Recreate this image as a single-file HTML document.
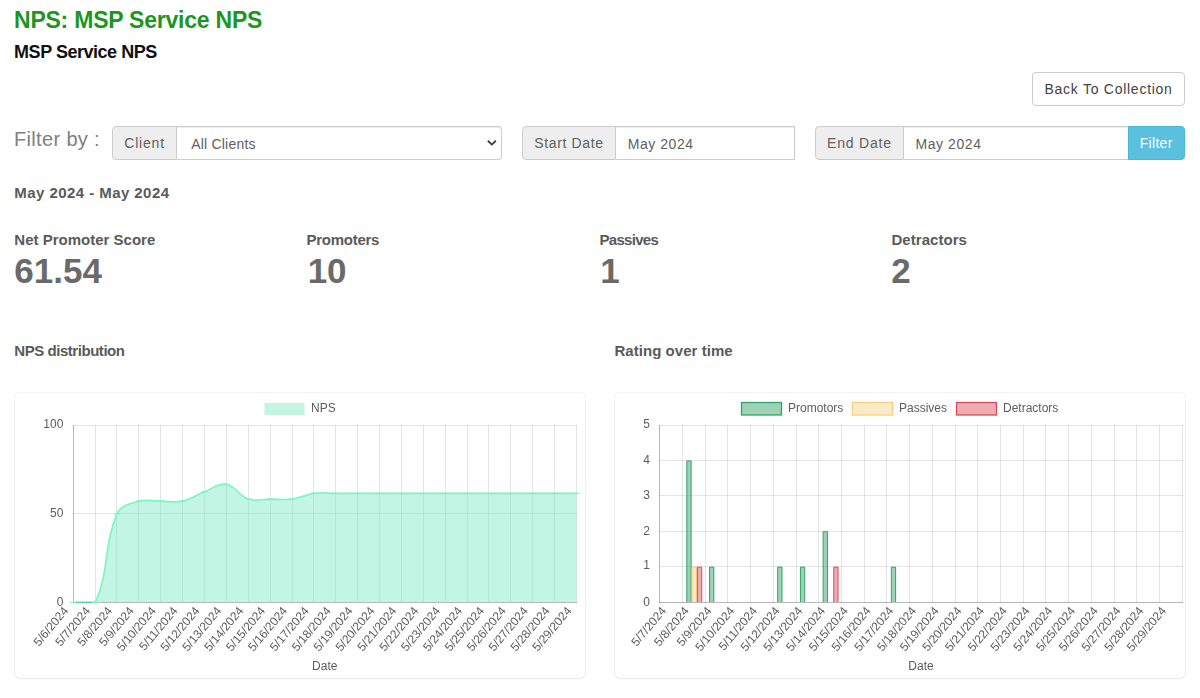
<!DOCTYPE html>
<html lang="en"><head><meta charset="utf-8"><title>NPS: MSP Service NPS</title>
<style>
*{box-sizing:border-box}
html,body{margin:0;padding:0;background:#fff}
body{width:1200px;height:698px;position:relative;overflow:hidden;font-family:"Liberation Sans",sans-serif}
.t{position:absolute;white-space:nowrap;line-height:1;display:block;margin:0;padding:0}
.box{position:absolute}
.addon{background:#eee;border:1px solid #ccc;border-radius:4px 0 0 4px}
.inp{background:#fff;border:1px solid #ccc;border-left:0;box-shadow:inset 0 1px 1px rgba(0,0,0,.075)}
.card{position:absolute;background:#fff;border-radius:5px;box-shadow:0 0 0 1px rgba(0,0,0,0.045),0 1px 2px rgba(0,0,0,0.06)}
.chart{position:absolute;overflow:visible}
.tk{font-family:"Liberation Sans",sans-serif;font-size:12px;fill:#5c5c5c;filter:grayscale(1)}
</style></head>
<body>
<div class="box" style="left:1032px;top:72px;width:153px;height:34px;border:1px solid #ccc;border-radius:4px;background:#fff"></div>
<div class="box addon" style="left:112px;top:126px;width:65px;height:34px"></div>
<div class="box inp" style="left:177px;top:126px;width:325px;height:34px;border-radius:0 4px 4px 0"></div>
<svg class="box" style="left:486.2px;top:139.3px" width="12" height="10" viewBox="0 0 12 10"><path d="M1.85,1.75 L5.85,5.6 L9.85,1.75" fill="none" stroke="#343a40" stroke-width="1.8" stroke-linecap="butt" stroke-linejoin="miter"/></svg>
<div class="box addon" style="left:522px;top:126px;width:94px;height:34px"></div>
<div class="box inp" style="left:616px;top:126px;width:179px;height:34px"></div>
<div class="box addon" style="left:815px;top:126px;width:89px;height:34px"></div>
<div class="box inp" style="left:904px;top:126px;width:225px;height:34px"></div>
<div class="box" style="left:1128px;top:126px;width:57px;height:34px;background:#5bc0de;border:1px solid #46b8da;border-radius:0 4px 4px 0"></div>
<div class="card" style="left:15px;top:393px;width:570px;height:285px"></div>
<div class="card" style="left:615px;top:393px;width:570px;height:285px"></div>
<h1 class="t" id="t_title" style="left:14.00px;top:8.73px;font-size:23px;font-weight:700;color:#1d961f;letter-spacing:-0.226px;">NPS: MSP Service NPS</h1>
<h2 class="t" id="t_sub" style="left:14.10px;top:42.86px;font-size:18px;font-weight:700;color:#111111;letter-spacing:-0.471px;">MSP Service NPS</h2>
<span class="t" id="t_back" style="left:1044.50px;top:82.15px;font-size:14px;font-weight:400;color:#424242;letter-spacing:0.735px;">Back To Collection</span>
<span class="t" id="t_filterby" style="left:14.00px;top:128.87px;font-size:20px;font-weight:400;color:#808080;letter-spacing:0.340px;">Filter by :</span>
<label class="t" id="t_client" style="left:124.25px;top:136.35px;font-size:14px;font-weight:400;color:#606060;letter-spacing:0.800px;">Client</label>
<span class="t" id="t_allcl" style="left:191.25px;top:136.75px;font-size:14px;font-weight:400;color:#606060;letter-spacing:0.200px;">All Clients</span>
<label class="t" id="t_sd" style="left:534.25px;top:136.35px;font-size:14px;font-weight:400;color:#606060;letter-spacing:0.639px;">Start Date</label>
<span class="t" id="t_sdv" style="left:627.75px;top:136.75px;font-size:14px;font-weight:400;color:#606060;letter-spacing:0.536px;">May 2024</span>
<label class="t" id="t_ed" style="left:827.00px;top:136.35px;font-size:14px;font-weight:400;color:#606060;letter-spacing:0.821px;">End Date</label>
<span class="t" id="t_edv" style="left:915.50px;top:136.75px;font-size:14px;font-weight:400;color:#606060;letter-spacing:0.571px;">May 2024</span>
<span class="t" id="t_filter" style="left:1139.75px;top:136.35px;font-size:14px;font-weight:400;color:#ffffff;letter-spacing:0.300px;">Filter</span>
<h4 class="t" id="t_range" style="left:14.35px;top:185.30px;font-size:15px;font-weight:700;color:#5a5a5a;letter-spacing:0.439px;">May 2024 - May 2024</h4>
<span class="t" id="t_l1" style="left:14.35px;top:232.30px;font-size:15px;font-weight:700;color:#5a5a5a;">Net Promoter Score</span>
<span class="t" id="t_l2" style="left:306.50px;top:232.30px;font-size:15px;font-weight:700;color:#5a5a5a;letter-spacing:-0.269px;">Promoters</span>
<span class="t" id="t_l3" style="left:599.40px;top:232.30px;font-size:15px;font-weight:700;color:#5a5a5a;letter-spacing:-0.679px;">Passives</span>
<span class="t" id="t_l4" style="left:891.50px;top:232.30px;font-size:15px;font-weight:700;color:#5a5a5a;letter-spacing:0.039px;">Detractors</span>
<span class="t" id="t_n1" style="left:14.25px;top:253.17px;font-size:35px;font-weight:700;color:#6a6a6a;letter-spacing:0.025px;">61.54</span>
<span class="t" id="t_n2" style="left:307.75px;top:253.17px;font-size:35px;font-weight:700;color:#6a6a6a;letter-spacing:-0.100px;">10</span>
<span class="t" id="t_n3" style="left:600.25px;top:253.17px;font-size:35px;font-weight:700;color:#6a6a6a;">1</span>
<span class="t" id="t_n4" style="left:891.25px;top:253.17px;font-size:35px;font-weight:700;color:#6a6a6a;">2</span>
<h3 class="t" id="t_h1" style="left:14.35px;top:343.30px;font-size:15px;font-weight:700;color:#5a5a5a;letter-spacing:-0.457px;">NPS distribution</h3>
<h3 class="t" id="t_h2" style="left:614.50px;top:343.30px;font-size:15px;font-weight:700;color:#5a5a5a;letter-spacing:0.040px;">Rating over time</h3>
<svg class="chart" style="left:15px;top:393px" width="570" height="285" viewBox="0 0 570 285">
<rect x="249.5" y="10" width="40" height="12" fill="#c3f5e3"/>
<text x="296" y="19.19999999999999" class="tk">NPS</text>
<line x1="58.5" y1="32.0" x2="58.5" y2="210.0" stroke="rgba(0,0,0,0.28)" stroke-width="1"/>
<line x1="80.5" y1="32.0" x2="80.5" y2="210.0" stroke="rgba(0,0,0,0.1)" stroke-width="1"/>
<line x1="101.5" y1="32.0" x2="101.5" y2="210.0" stroke="rgba(0,0,0,0.1)" stroke-width="1"/>
<line x1="123.5" y1="32.0" x2="123.5" y2="210.0" stroke="rgba(0,0,0,0.1)" stroke-width="1"/>
<line x1="145.5" y1="32.0" x2="145.5" y2="210.0" stroke="rgba(0,0,0,0.1)" stroke-width="1"/>
<line x1="167.5" y1="32.0" x2="167.5" y2="210.0" stroke="rgba(0,0,0,0.1)" stroke-width="1"/>
<line x1="189.5" y1="32.0" x2="189.5" y2="210.0" stroke="rgba(0,0,0,0.1)" stroke-width="1"/>
<line x1="211.5" y1="32.0" x2="211.5" y2="210.0" stroke="rgba(0,0,0,0.1)" stroke-width="1"/>
<line x1="233.5" y1="32.0" x2="233.5" y2="210.0" stroke="rgba(0,0,0,0.1)" stroke-width="1"/>
<line x1="255.5" y1="32.0" x2="255.5" y2="210.0" stroke="rgba(0,0,0,0.1)" stroke-width="1"/>
<line x1="277.5" y1="32.0" x2="277.5" y2="210.0" stroke="rgba(0,0,0,0.1)" stroke-width="1"/>
<line x1="298.5" y1="32.0" x2="298.5" y2="210.0" stroke="rgba(0,0,0,0.1)" stroke-width="1"/>
<line x1="320.5" y1="32.0" x2="320.5" y2="210.0" stroke="rgba(0,0,0,0.1)" stroke-width="1"/>
<line x1="342.5" y1="32.0" x2="342.5" y2="210.0" stroke="rgba(0,0,0,0.1)" stroke-width="1"/>
<line x1="364.5" y1="32.0" x2="364.5" y2="210.0" stroke="rgba(0,0,0,0.1)" stroke-width="1"/>
<line x1="386.5" y1="32.0" x2="386.5" y2="210.0" stroke="rgba(0,0,0,0.1)" stroke-width="1"/>
<line x1="408.5" y1="32.0" x2="408.5" y2="210.0" stroke="rgba(0,0,0,0.1)" stroke-width="1"/>
<line x1="430.5" y1="32.0" x2="430.5" y2="210.0" stroke="rgba(0,0,0,0.1)" stroke-width="1"/>
<line x1="452.5" y1="32.0" x2="452.5" y2="210.0" stroke="rgba(0,0,0,0.1)" stroke-width="1"/>
<line x1="473.5" y1="32.0" x2="473.5" y2="210.0" stroke="rgba(0,0,0,0.1)" stroke-width="1"/>
<line x1="495.5" y1="32.0" x2="495.5" y2="210.0" stroke="rgba(0,0,0,0.1)" stroke-width="1"/>
<line x1="517.5" y1="32.0" x2="517.5" y2="210.0" stroke="rgba(0,0,0,0.1)" stroke-width="1"/>
<line x1="539.5" y1="32.0" x2="539.5" y2="210.0" stroke="rgba(0,0,0,0.1)" stroke-width="1"/>
<line x1="561.5" y1="32.0" x2="561.5" y2="210.0" stroke="rgba(0,0,0,0.1)" stroke-width="1"/>
<line x1="58" y1="32.5" x2="562" y2="32.5" stroke="rgba(0,0,0,0.1)" stroke-width="1"/>
<text x="48.4" y="35.3" text-anchor="end" class="tk">100</text>
<line x1="58" y1="120.5" x2="562" y2="120.5" stroke="rgba(0,0,0,0.1)" stroke-width="1"/>
<text x="48.4" y="124.3" text-anchor="end" class="tk">50</text>
<line x1="58" y1="209.5" x2="562" y2="209.5" stroke="rgba(0,0,0,0.28)" stroke-width="1"/>
<text x="48.4" y="213.4" text-anchor="end" class="tk">0</text>
<path d="M58.22,209.30 C66.97,209.30 76.71,209.30 80.10,209.30 C94.22,180.75 88.27,152.48 101.98,120.80 C105.78,112.02 114.48,110.87 123.86,108.16 C131.98,105.82 136.99,108.16 145.74,108.16 C154.49,108.16 159.24,109.98 167.62,108.16 C176.75,106.18 180.61,102.10 189.50,98.68 C198.11,95.36 203.21,89.92 211.38,91.29 C220.72,92.87 223.69,102.83 233.26,106.06 C241.19,108.73 246.39,106.06 255.14,106.06 C263.89,106.06 268.41,107.17 277.02,106.06 C285.91,104.90 290.01,101.53 298.90,100.37 C307.51,99.26 312.03,100.37 320.78,100.37 C329.53,100.37 333.91,100.37 342.66,100.37 C351.41,100.37 355.79,100.37 364.54,100.37 C373.29,100.37 377.67,100.37 386.42,100.37 C395.17,100.37 399.55,100.37 408.30,100.37 C417.05,100.37 421.43,100.37 430.18,100.37 C438.93,100.37 443.31,100.37 452.06,100.37 C460.81,100.37 465.19,100.37 473.94,100.37 C482.69,100.37 487.07,100.37 495.82,100.37 C504.57,100.37 508.95,100.37 517.70,100.37 C526.45,100.37 530.83,100.37 539.58,100.37 C548.33,100.37 552.71,100.37 561.46,100.37 L561.46,209.3 L58.22,209.3 Z" fill="rgba(110,232,188,0.42)"/>
<path d="M58.22,209.30 C66.97,209.30 76.71,209.30 80.10,209.30 C94.22,180.75 88.27,152.48 101.98,120.80 C105.78,112.02 114.48,110.87 123.86,108.16 C131.98,105.82 136.99,108.16 145.74,108.16 C154.49,108.16 159.24,109.98 167.62,108.16 C176.75,106.18 180.61,102.10 189.50,98.68 C198.11,95.36 203.21,89.92 211.38,91.29 C220.72,92.87 223.69,102.83 233.26,106.06 C241.19,108.73 246.39,106.06 255.14,106.06 C263.89,106.06 268.41,107.17 277.02,106.06 C285.91,104.90 290.01,101.53 298.90,100.37 C307.51,99.26 312.03,100.37 320.78,100.37 C329.53,100.37 333.91,100.37 342.66,100.37 C351.41,100.37 355.79,100.37 364.54,100.37 C373.29,100.37 377.67,100.37 386.42,100.37 C395.17,100.37 399.55,100.37 408.30,100.37 C417.05,100.37 421.43,100.37 430.18,100.37 C438.93,100.37 443.31,100.37 452.06,100.37 C460.81,100.37 465.19,100.37 473.94,100.37 C482.69,100.37 487.07,100.37 495.82,100.37 C504.57,100.37 508.95,100.37 517.70,100.37 C526.45,100.37 530.83,100.37 539.58,100.37 C548.33,100.37 552.71,100.37 561.46,100.37" fill="none" stroke="#7df6bf" stroke-width="1.65"/>
<line x1="55.22" y1="209.30" x2="61.22" y2="209.30" stroke="#7af5bd" stroke-width="1.2"/>
<line x1="77.10" y1="209.30" x2="83.10" y2="209.30" stroke="#7af5bd" stroke-width="1.2"/>
<line x1="98.98" y1="120.80" x2="104.98" y2="120.80" stroke="#7af5bd" stroke-width="1.2"/>
<line x1="120.86" y1="108.16" x2="126.86" y2="108.16" stroke="#7af5bd" stroke-width="1.2"/>
<line x1="142.74" y1="108.16" x2="148.74" y2="108.16" stroke="#7af5bd" stroke-width="1.2"/>
<line x1="164.62" y1="108.16" x2="170.62" y2="108.16" stroke="#7af5bd" stroke-width="1.2"/>
<line x1="186.50" y1="98.68" x2="192.50" y2="98.68" stroke="#7af5bd" stroke-width="1.2"/>
<line x1="208.38" y1="91.29" x2="214.38" y2="91.29" stroke="#7af5bd" stroke-width="1.2"/>
<line x1="230.26" y1="106.06" x2="236.26" y2="106.06" stroke="#7af5bd" stroke-width="1.2"/>
<line x1="252.14" y1="106.06" x2="258.14" y2="106.06" stroke="#7af5bd" stroke-width="1.2"/>
<line x1="274.02" y1="106.06" x2="280.02" y2="106.06" stroke="#7af5bd" stroke-width="1.2"/>
<line x1="295.90" y1="100.37" x2="301.90" y2="100.37" stroke="#7af5bd" stroke-width="1.2"/>
<line x1="317.78" y1="100.37" x2="323.78" y2="100.37" stroke="#7af5bd" stroke-width="1.2"/>
<line x1="339.66" y1="100.37" x2="345.66" y2="100.37" stroke="#7af5bd" stroke-width="1.2"/>
<line x1="361.54" y1="100.37" x2="367.54" y2="100.37" stroke="#7af5bd" stroke-width="1.2"/>
<line x1="383.42" y1="100.37" x2="389.42" y2="100.37" stroke="#7af5bd" stroke-width="1.2"/>
<line x1="405.30" y1="100.37" x2="411.30" y2="100.37" stroke="#7af5bd" stroke-width="1.2"/>
<line x1="427.18" y1="100.37" x2="433.18" y2="100.37" stroke="#7af5bd" stroke-width="1.2"/>
<line x1="449.06" y1="100.37" x2="455.06" y2="100.37" stroke="#7af5bd" stroke-width="1.2"/>
<line x1="470.94" y1="100.37" x2="476.94" y2="100.37" stroke="#7af5bd" stroke-width="1.2"/>
<line x1="492.82" y1="100.37" x2="498.82" y2="100.37" stroke="#7af5bd" stroke-width="1.2"/>
<line x1="514.70" y1="100.37" x2="520.70" y2="100.37" stroke="#7af5bd" stroke-width="1.2"/>
<line x1="536.58" y1="100.37" x2="542.58" y2="100.37" stroke="#7af5bd" stroke-width="1.2"/>
<line x1="558.46" y1="100.37" x2="564.46" y2="100.37" stroke="#7af5bd" stroke-width="1.2"/>
<line x1="61.22" y1="209.3" x2="77.10" y2="209.3" stroke="rgba(0,0,0,0.22)" stroke-width="1"/>
<text transform="translate(51.52,216.10) rotate(-50)" text-anchor="end" dominant-baseline="middle" class="tk">5/6/2024</text>
<text transform="translate(73.40,216.10) rotate(-50)" text-anchor="end" dominant-baseline="middle" class="tk">5/7/2024</text>
<text transform="translate(95.28,216.10) rotate(-50)" text-anchor="end" dominant-baseline="middle" class="tk">5/8/2024</text>
<text transform="translate(117.16,216.10) rotate(-50)" text-anchor="end" dominant-baseline="middle" class="tk">5/9/2024</text>
<text transform="translate(139.04,216.10) rotate(-50)" text-anchor="end" dominant-baseline="middle" class="tk">5/10/2024</text>
<text transform="translate(160.92,216.10) rotate(-50)" text-anchor="end" dominant-baseline="middle" class="tk">5/11/2024</text>
<text transform="translate(182.80,216.10) rotate(-50)" text-anchor="end" dominant-baseline="middle" class="tk">5/12/2024</text>
<text transform="translate(204.68,216.10) rotate(-50)" text-anchor="end" dominant-baseline="middle" class="tk">5/13/2024</text>
<text transform="translate(226.56,216.10) rotate(-50)" text-anchor="end" dominant-baseline="middle" class="tk">5/14/2024</text>
<text transform="translate(248.44,216.10) rotate(-50)" text-anchor="end" dominant-baseline="middle" class="tk">5/15/2024</text>
<text transform="translate(270.32,216.10) rotate(-50)" text-anchor="end" dominant-baseline="middle" class="tk">5/16/2024</text>
<text transform="translate(292.20,216.10) rotate(-50)" text-anchor="end" dominant-baseline="middle" class="tk">5/17/2024</text>
<text transform="translate(314.08,216.10) rotate(-50)" text-anchor="end" dominant-baseline="middle" class="tk">5/18/2024</text>
<text transform="translate(335.96,216.10) rotate(-50)" text-anchor="end" dominant-baseline="middle" class="tk">5/19/2024</text>
<text transform="translate(357.84,216.10) rotate(-50)" text-anchor="end" dominant-baseline="middle" class="tk">5/20/2024</text>
<text transform="translate(379.72,216.10) rotate(-50)" text-anchor="end" dominant-baseline="middle" class="tk">5/21/2024</text>
<text transform="translate(401.60,216.10) rotate(-50)" text-anchor="end" dominant-baseline="middle" class="tk">5/22/2024</text>
<text transform="translate(423.48,216.10) rotate(-50)" text-anchor="end" dominant-baseline="middle" class="tk">5/23/2024</text>
<text transform="translate(445.36,216.10) rotate(-50)" text-anchor="end" dominant-baseline="middle" class="tk">5/24/2024</text>
<text transform="translate(467.24,216.10) rotate(-50)" text-anchor="end" dominant-baseline="middle" class="tk">5/25/2024</text>
<text transform="translate(489.12,216.10) rotate(-50)" text-anchor="end" dominant-baseline="middle" class="tk">5/26/2024</text>
<text transform="translate(511.00,216.10) rotate(-50)" text-anchor="end" dominant-baseline="middle" class="tk">5/27/2024</text>
<text transform="translate(532.88,216.10) rotate(-50)" text-anchor="end" dominant-baseline="middle" class="tk">5/28/2024</text>
<text transform="translate(554.76,216.10) rotate(-50)" text-anchor="end" dominant-baseline="middle" class="tk">5/29/2024</text>
<text x="309.8" y="277" text-anchor="middle" class="tk">Date</text>
</svg>
<svg class="chart" style="left:615px;top:393px" width="570" height="285" viewBox="0 0 570 285">
<rect x="126.5" y="9.5" width="40" height="12.5" fill="rgba(58,166,109,0.5)" stroke="#36a168" stroke-width="1.3"/>
<text x="173" y="19.19999999999999" class="tk">Promotors</text>
<rect x="237.5" y="9.5" width="40" height="12.5" fill="rgba(248,213,140,0.5)" stroke="#f6d080" stroke-width="1.3"/>
<text x="284" y="19.19999999999999" class="tk">Passives</text>
<rect x="341.5" y="9.5" width="40" height="12.5" fill="rgba(222,88,102,0.5)" stroke="#d84a59" stroke-width="1.3"/>
<text x="388" y="19.19999999999999" class="tk">Detractors</text>
<line x1="44.5" y1="32.0" x2="44.5" y2="210.0" stroke="rgba(0,0,0,0.28)" stroke-width="1"/>
<line x1="67.5" y1="32.0" x2="67.5" y2="210.0" stroke="rgba(0,0,0,0.1)" stroke-width="1"/>
<line x1="90.5" y1="32.0" x2="90.5" y2="210.0" stroke="rgba(0,0,0,0.1)" stroke-width="1"/>
<line x1="112.5" y1="32.0" x2="112.5" y2="210.0" stroke="rgba(0,0,0,0.1)" stroke-width="1"/>
<line x1="135.5" y1="32.0" x2="135.5" y2="210.0" stroke="rgba(0,0,0,0.1)" stroke-width="1"/>
<line x1="158.5" y1="32.0" x2="158.5" y2="210.0" stroke="rgba(0,0,0,0.1)" stroke-width="1"/>
<line x1="181.5" y1="32.0" x2="181.5" y2="210.0" stroke="rgba(0,0,0,0.1)" stroke-width="1"/>
<line x1="203.5" y1="32.0" x2="203.5" y2="210.0" stroke="rgba(0,0,0,0.1)" stroke-width="1"/>
<line x1="226.5" y1="32.0" x2="226.5" y2="210.0" stroke="rgba(0,0,0,0.1)" stroke-width="1"/>
<line x1="249.5" y1="32.0" x2="249.5" y2="210.0" stroke="rgba(0,0,0,0.1)" stroke-width="1"/>
<line x1="271.5" y1="32.0" x2="271.5" y2="210.0" stroke="rgba(0,0,0,0.1)" stroke-width="1"/>
<line x1="294.5" y1="32.0" x2="294.5" y2="210.0" stroke="rgba(0,0,0,0.1)" stroke-width="1"/>
<line x1="317.5" y1="32.0" x2="317.5" y2="210.0" stroke="rgba(0,0,0,0.1)" stroke-width="1"/>
<line x1="340.5" y1="32.0" x2="340.5" y2="210.0" stroke="rgba(0,0,0,0.1)" stroke-width="1"/>
<line x1="362.5" y1="32.0" x2="362.5" y2="210.0" stroke="rgba(0,0,0,0.1)" stroke-width="1"/>
<line x1="385.5" y1="32.0" x2="385.5" y2="210.0" stroke="rgba(0,0,0,0.1)" stroke-width="1"/>
<line x1="408.5" y1="32.0" x2="408.5" y2="210.0" stroke="rgba(0,0,0,0.1)" stroke-width="1"/>
<line x1="430.5" y1="32.0" x2="430.5" y2="210.0" stroke="rgba(0,0,0,0.1)" stroke-width="1"/>
<line x1="453.5" y1="32.0" x2="453.5" y2="210.0" stroke="rgba(0,0,0,0.1)" stroke-width="1"/>
<line x1="476.5" y1="32.0" x2="476.5" y2="210.0" stroke="rgba(0,0,0,0.1)" stroke-width="1"/>
<line x1="499.5" y1="32.0" x2="499.5" y2="210.0" stroke="rgba(0,0,0,0.1)" stroke-width="1"/>
<line x1="521.5" y1="32.0" x2="521.5" y2="210.0" stroke="rgba(0,0,0,0.1)" stroke-width="1"/>
<line x1="544.5" y1="32.0" x2="544.5" y2="210.0" stroke="rgba(0,0,0,0.1)" stroke-width="1"/>
<line x1="567.5" y1="32.0" x2="567.5" y2="210.0" stroke="rgba(0,0,0,0.1)" stroke-width="1"/>
<line x1="44" y1="32.5" x2="568" y2="32.5" stroke="rgba(0,0,0,0.1)" stroke-width="1"/>
<text x="34.9" y="35.3" text-anchor="end" class="tk">5</text>
<line x1="44" y1="67.5" x2="568" y2="67.5" stroke="rgba(0,0,0,0.1)" stroke-width="1"/>
<text x="34.9" y="70.8" text-anchor="end" class="tk">4</text>
<line x1="44" y1="102.5" x2="568" y2="102.5" stroke="rgba(0,0,0,0.1)" stroke-width="1"/>
<text x="34.9" y="105.5" text-anchor="end" class="tk">3</text>
<line x1="44" y1="138.5" x2="568" y2="138.5" stroke="rgba(0,0,0,0.1)" stroke-width="1"/>
<text x="34.9" y="141.5" text-anchor="end" class="tk">2</text>
<line x1="44" y1="173.5" x2="568" y2="173.5" stroke="rgba(0,0,0,0.1)" stroke-width="1"/>
<text x="34.9" y="176.4" text-anchor="end" class="tk">1</text>
<line x1="44" y1="209.5" x2="568" y2="209.5" stroke="rgba(0,0,0,0.28)" stroke-width="1"/>
<text x="34.9" y="213.1" text-anchor="end" class="tk">0</text>
<path d="M71.82,209.0 L71.82,67.90 L76.12,67.90 L76.12,209.0" fill="rgba(58,166,109,0.5)" stroke="#36a168" stroke-width="1"/>
<path d="M94.54,209.0 L94.54,174.10 L98.84,174.10 L98.84,209.0" fill="rgba(58,166,109,0.5)" stroke="#36a168" stroke-width="1"/>
<path d="M162.71,209.0 L162.71,174.10 L167.01,174.10 L167.01,209.0" fill="rgba(58,166,109,0.5)" stroke="#36a168" stroke-width="1"/>
<path d="M185.43,209.0 L185.43,174.10 L189.73,174.10 L189.73,209.0" fill="rgba(58,166,109,0.5)" stroke="#36a168" stroke-width="1"/>
<path d="M208.15,209.0 L208.15,138.70 L212.45,138.70 L212.45,209.0" fill="rgba(58,166,109,0.5)" stroke="#36a168" stroke-width="1"/>
<path d="M276.32,209.0 L276.32,174.10 L280.62,174.10 L280.62,209.0" fill="rgba(58,166,109,0.5)" stroke="#36a168" stroke-width="1"/>
<path d="M77.12,209.0 L77.12,174.10 L81.42,174.10 L81.42,209.0" fill="rgba(248,213,140,0.5)" stroke="#f6d080" stroke-width="1"/>
<path d="M82.42,209.0 L82.42,174.10 L86.72,174.10 L86.72,209.0" fill="rgba(222,88,102,0.5)" stroke="#d84a59" stroke-width="1"/>
<path d="M218.75,209.0 L218.75,174.10 L223.05,174.10 L223.05,209.0" fill="rgba(222,88,102,0.5)" stroke="#d84a59" stroke-width="1"/>
<text transform="translate(49.36,216.10) rotate(-50)" text-anchor="end" dominant-baseline="middle" class="tk">5/7/2024</text>
<text transform="translate(72.08,216.10) rotate(-50)" text-anchor="end" dominant-baseline="middle" class="tk">5/8/2024</text>
<text transform="translate(94.80,216.10) rotate(-50)" text-anchor="end" dominant-baseline="middle" class="tk">5/9/2024</text>
<text transform="translate(117.53,216.10) rotate(-50)" text-anchor="end" dominant-baseline="middle" class="tk">5/10/2024</text>
<text transform="translate(140.25,216.10) rotate(-50)" text-anchor="end" dominant-baseline="middle" class="tk">5/11/2024</text>
<text transform="translate(162.97,216.10) rotate(-50)" text-anchor="end" dominant-baseline="middle" class="tk">5/12/2024</text>
<text transform="translate(185.69,216.10) rotate(-50)" text-anchor="end" dominant-baseline="middle" class="tk">5/13/2024</text>
<text transform="translate(208.41,216.10) rotate(-50)" text-anchor="end" dominant-baseline="middle" class="tk">5/14/2024</text>
<text transform="translate(231.13,216.10) rotate(-50)" text-anchor="end" dominant-baseline="middle" class="tk">5/15/2024</text>
<text transform="translate(253.86,216.10) rotate(-50)" text-anchor="end" dominant-baseline="middle" class="tk">5/16/2024</text>
<text transform="translate(276.58,216.10) rotate(-50)" text-anchor="end" dominant-baseline="middle" class="tk">5/17/2024</text>
<text transform="translate(299.30,216.10) rotate(-50)" text-anchor="end" dominant-baseline="middle" class="tk">5/18/2024</text>
<text transform="translate(322.02,216.10) rotate(-50)" text-anchor="end" dominant-baseline="middle" class="tk">5/19/2024</text>
<text transform="translate(344.74,216.10) rotate(-50)" text-anchor="end" dominant-baseline="middle" class="tk">5/20/2024</text>
<text transform="translate(367.47,216.10) rotate(-50)" text-anchor="end" dominant-baseline="middle" class="tk">5/21/2024</text>
<text transform="translate(390.19,216.10) rotate(-50)" text-anchor="end" dominant-baseline="middle" class="tk">5/22/2024</text>
<text transform="translate(412.91,216.10) rotate(-50)" text-anchor="end" dominant-baseline="middle" class="tk">5/23/2024</text>
<text transform="translate(435.63,216.10) rotate(-50)" text-anchor="end" dominant-baseline="middle" class="tk">5/24/2024</text>
<text transform="translate(458.35,216.10) rotate(-50)" text-anchor="end" dominant-baseline="middle" class="tk">5/25/2024</text>
<text transform="translate(481.07,216.10) rotate(-50)" text-anchor="end" dominant-baseline="middle" class="tk">5/26/2024</text>
<text transform="translate(503.80,216.10) rotate(-50)" text-anchor="end" dominant-baseline="middle" class="tk">5/27/2024</text>
<text transform="translate(526.52,216.10) rotate(-50)" text-anchor="end" dominant-baseline="middle" class="tk">5/28/2024</text>
<text transform="translate(549.24,216.10) rotate(-50)" text-anchor="end" dominant-baseline="middle" class="tk">5/29/2024</text>
<text x="306.0" y="277" text-anchor="middle" class="tk">Date</text>
</svg>
</body></html>
